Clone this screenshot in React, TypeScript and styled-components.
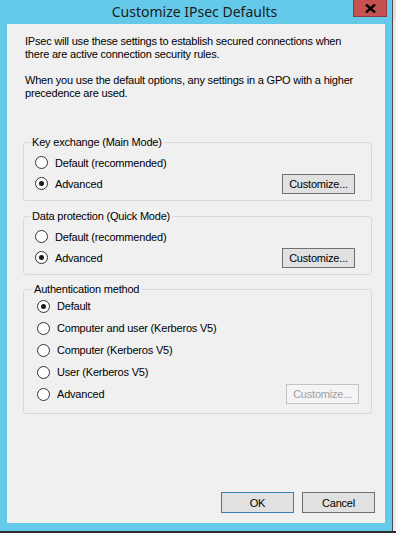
import React from 'react';
import styled, { createGlobalStyle } from 'styled-components';

const GlobalStyle = createGlobalStyle`
  html, body {
    margin: 0;
    padding: 0;
    background: #2e2e2e;
  }
  * {
    box-sizing: border-box;
  }
`

type RadioOption = {
  label: string
  checked?: boolean
  action?: 'enabled' | 'disabled'
}

type Group = {
  title: string
  gap: number
  indent: number
  right: number
  listOffset: number
  bottom: number
  rowHeight: number
  options: RadioOption[]
}

const groups: Group[] = [
  {
    title: 'Key exchange (Main Mode)',
    gap: 0,
    indent: 11,
    right: 16,
    listOffset: 3,
    bottom: 6,
    rowHeight: 21,
    options: [
      { label: 'Default (recommended)' },
      { label: 'Advanced', checked: true, action: 'enabled' },
    ],
  },
  {
    title: 'Data protection (Quick Mode)',
    gap: 9,
    indent: 11,
    right: 16,
    listOffset: 3,
    bottom: 6,
    rowHeight: 21,
    options: [
      { label: 'Default (recommended)' },
      { label: 'Advanced', checked: true, action: 'enabled' },
    ],
  },
  {
    title: 'Authentication method',
    gap: 8,
    indent: 13,
    right: 12,
    listOffset: -1,
    bottom: 8,
    rowHeight: 22,
    options: [
      { label: 'Default', checked: true },
      { label: 'Computer and user (Kerberos V5)' },
      { label: 'Computer (Kerberos V5)' },
      { label: 'User (Kerberos V5)' },
      { label: 'Advanced', action: 'disabled' },
    ],
  },
]

const App: React.FC = () => {
  return (
    <Screen>
      <GlobalStyle />
      <Window>
        <TitleBar>
          <span />
          <Title>Customize IPsec Defaults</Title>
          <CloseButton>
            <svg width="11" height="9" viewBox="0 0 11 9">
              <path d="M1 0.5 L10 8.5 M10 0.5 L1 8.5" stroke="#000" strokeWidth="2.4" />
            </svg>
          </CloseButton>
        </TitleBar>

        <Client>
          <Intro>
            <p>
              IPsec will use these settings to establish secured connections when
              <br />
              there are active connection security rules.
            </p>
            <p>
              When you use the default options, any settings in a GPO with a higher
              <br />
              precedence are used.
            </p>
          </Intro>

          {groups.map(group => (
            <GroupBox
              key={group.title}
              $gap={group.gap}
              $indent={group.indent}
              $right={group.right}
              $bottom={group.bottom}
            >
              <Legend>{group.title}</Legend>
              <OptionList $offset={group.listOffset}>
                {group.options.map(option => (
                  <OptionRow key={option.label} $height={group.rowHeight}>
                    <RadioLabel>
                      <RadioCircle $checked={!!option.checked} />
                      {option.label}
                    </RadioLabel>
                    {option.action && (
                      <PushButton $disabled={option.action === 'disabled'}>Customize...</PushButton>
                    )}
                  </OptionRow>
                ))}
              </OptionList>
            </GroupBox>
          ))}

          <Footer>
            <DialogButton $default>OK</DialogButton>
            <DialogButton>Cancel</DialogButton>
          </Footer>
        </Client>
      </Window>
      <Behind>
        <BehindTop />
        <BehindRest />
      </Behind>
    </Screen>
  )
}

const Screen = styled.div`
  width: 396px;
  height: 533px;
  display: flex;
  align-items: flex-start;
  font-family: "Liberation Sans", Arial, sans-serif;
  font-size: 11px;
  letter-spacing: -0.2px;
  color: #000;
`

const Window = styled.div`
  width: 392px;
  height: 531px;
  background: #65c9ea;
  display: flex;
  flex-direction: column;
  padding-bottom: 8px;
`

const TitleBar = styled.div`
  height: 24px;
  flex-shrink: 0;
  display: grid;
  grid-template-columns: 1fr auto 1fr;
  align-items: start;
  padding-right: 5px;
`

const Title = styled.div`
  font-family: "Noto Sans", "Open Sans", sans-serif;
  font-size: 14px;
  letter-spacing: 0;
  line-height: 24px;
  color: #1b1b1b;
  white-space: nowrap;
  padding-left: 2px;
`

const CloseButton = styled.div`
  justify-self: end;
  width: 34px;
  height: 17px;
  background: #c75050;
  border: 1px solid #8c3a3a;
  border-top: none;
  display: flex;
  align-items: center;
  justify-content: center;
`

const Client = styled.div`
  flex: 1;
  margin: 0 7px;
  background: #f0f0f0;
  display: flex;
  flex-direction: column;
  padding: 11px 13px 10px 16px;
`

const Intro = styled.div`
  padding-left: 2px;
  line-height: 13px;
  margin-bottom: 36px;
  white-space: nowrap;

  p {
    margin: 0 0 13px;
  }

  p:last-child {
    margin-bottom: 0;
  }
`

const GroupBox = styled.fieldset<{ $gap: number; $indent: number; $right: number; $bottom: number }>`
  margin: ${props => props.$gap}px 0 0;
  padding: 0 ${props => props.$right}px ${props => props.$bottom}px ${props => props.$indent}px;
  border: 1px solid #d5dadd;
  border-radius: 3px;
  min-width: 0;
`

const Legend = styled.legend`
  line-height: 13px;
  padding: 0 2px 0 1px;
  margin-left: -4px;
`

const OptionList = styled.div<{ $offset: number }>`
  margin-top: ${props => props.$offset}px;
  display: flex;
  flex-direction: column;
`

const OptionRow = styled.div<{ $height: number }>`
  height: ${props => props.$height}px;
  display: flex;
  align-items: center;
  justify-content: space-between;
`

const RadioLabel = styled.label`
  display: flex;
  align-items: center;
  gap: 7px;
  white-space: nowrap;
`

const RadioCircle = styled.span<{ $checked: boolean }>`
  width: 13px;
  height: 13px;
  border-radius: 50%;
  border: 1px solid #333;
  background: #fff;
  display: flex;
  align-items: center;
  justify-content: center;

  &::after {
    content: '';
    width: 5px;
    height: 5px;
    border-radius: 50%;
    background: ${props => (props.$checked ? '#1a1a1a' : 'transparent')};
  }
`

const PushButton = styled.div<{ $disabled?: boolean }>`
  width: 73px;
  height: 20px;
  display: flex;
  align-items: center;
  justify-content: center;
  border: 1px solid ${props => (props.$disabled ? '#c4c4c4' : '#707070')};
  background: ${props => (props.$disabled ? '#f4f4f4' : '#e1e1e1')};
  color: ${props => (props.$disabled ? '#a0a0a0' : '#000')};
`

const Footer = styled.div`
  margin-top: auto;
  display: flex;
  justify-content: flex-end;
  gap: 8px;
  margin-right: -3px;
`

const DialogButton = styled.div<{ $default?: boolean }>`
  width: 73px;
  height: 21px;
  display: flex;
  align-items: center;
  justify-content: center;
  border: 1px solid ${props => (props.$default ? '#3c7fb1' : '#707070')};
  background: #e1e1e1;
`

const Behind = styled.div`
  width: 4px;
  height: 531px;
  display: flex;
  flex-direction: column;
  border-left: 1px solid #4a4a4a;
`

const BehindTop = styled.div`
  height: 20px;
  background: #e2e2e2;
`

const BehindRest = styled.div`
  flex: 1;
  background: #ececec;
`

export default App
